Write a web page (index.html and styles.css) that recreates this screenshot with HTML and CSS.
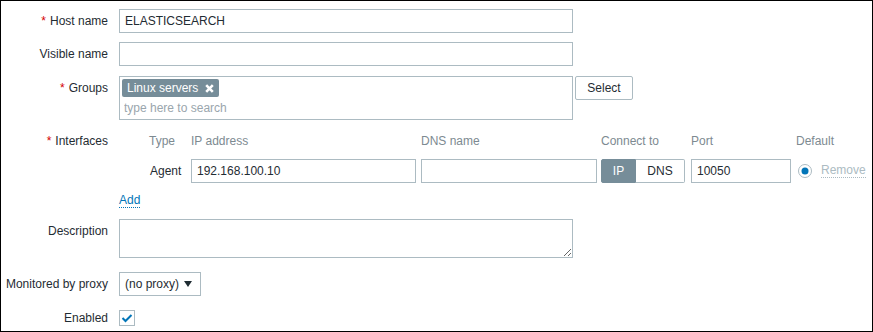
FILE: index.html
```html
<!DOCTYPE html>
<html lang="en">
<head>
  <meta charset="UTF-8" />
  <title>Host</title>
  <link rel="stylesheet" href="styles.css">
</head>
<body>

  <div class="page">
    <div class="form">

      <div class="row row-host">
        <label class="lbl req">Host name</label>
        <input class="input wide" type="text" value="ELASTICSEARCH" />
      </div>

      <div class="row row-visible">
        <label class="lbl">Visible name</label>
        <input class="input wide" type="text" />
      </div>

      <div class="row row-groups">
        <label class="lbl req">Groups</label>
        <div class="multiselect">
          <span class="tag">Linux servers
            <svg class="tag-x" width="9" height="9" viewBox="0 0 9 9"><path d="M1.2 1.2 L7.8 7.8 M7.8 1.2 L1.2 7.8" stroke="#fff" stroke-width="2.6" /></svg>
          </span>
          <input class="ms-search" type="text" placeholder="type here to search" />
        </div>
        <button class="btn">Select</button>
      </div>

      <div class="row row-ifaces">
        <label class="lbl req">Interfaces</label>
        <div class="ifaces">
          <div class="if-grid if-head">
            <span class="col-type">Type</span>
            <span>IP address</span>
            <span>DNS name</span>
            <span>Connect to</span>
            <span>Port</span>
            <span>Default</span>
          </div>
          <div class="if-grid if-row">
            <span class="col-type">Agent</span>
            <input class="input ip" type="text" value="192.168.100.10" />
            <input class="input dns" type="text" />
            <div class="toggle">
              <span class="seg on">IP</span>
              <span class="seg">DNS</span>
            </div>
            <input class="input port" type="text" value="10050" />
            <div class="default">
              <svg class="radio" width="14" height="14" viewBox="0 0 14 14">
                <circle cx="7" cy="7" r="6.5" fill="#fff" stroke="#acbbc2" />
                <circle cx="7" cy="7" r="3.5" fill="#0275b8" />
              </svg>
              <span class="link-off">Remove</span>
            </div>
          </div>
          <a class="link" href="#">Add</a>
        </div>
      </div>

      <div class="row row-desc">
        <label class="lbl">Description</label>
        <textarea class="textarea"></textarea>
      </div>

      <div class="row row-proxy">
        <label class="lbl">Monitored by proxy</label>
        <div class="select">
          <span>(no proxy)</span>
          <svg width="8" height="6" viewBox="0 0 8 6"><path d="M0 0 H8 L4 6 Z" fill="#1f2c33" /></svg>
        </div>
      </div>

      <div class="row row-enabled">
        <label class="lbl">Enabled</label>
        <div class="checkbox">
          <svg width="12" height="10" viewBox="0 0 12 10"><path d="M1.5 5 L4.5 8 L10.5 2" fill="none" stroke="#0275b8" stroke-width="2" /></svg>
        </div>
      </div>

    </div>
  </div>

</body>
</html>
```

FILE: styles.css
```css
body {
  margin: 0;
  font-family: "Liberation Sans", Arial, sans-serif;
  font-size: 12px;
  color: #1f2c33;
  background-color: #fff;
}

.page {
  box-sizing: border-box;
  width: 873px;
  height: 332px;
  border: 1px solid #000;
  overflow: hidden;
}

.form {
  padding-top: 8px;
  display: flex;
  flex-direction: column;
}

.row {
  display: flex;
  align-items: flex-start;
}

.row-visible { margin-top: 9px; }
.row-groups { margin-top: 10px; }
.row-ifaces { margin-top: 9px; }
.row-desc { margin-top: 6px; }
.row-proxy { margin-top: 14px; }
.row-enabled { margin-top: 10px; }

.lbl {
  box-sizing: border-box;
  width: 118px;
  padding-right: 11px;
  text-align: right;
  line-height: 24px;
  white-space: nowrap;
}

.lbl.req::before {
  content: "*";
  color: #d40000;
  margin-right: 4px;
}

.input {
  box-sizing: border-box;
  height: 24px;
  margin: 0;
  padding: 0 5px;
  border: 1px solid #acbbc2;
  border-radius: 0;
  font-family: inherit;
  font-size: 12px;
  color: #1f2c33;
  background: #fff;
  outline: none;
}

.wide { width: 454px; }

/* Groups multiselect */
.multiselect {
  box-sizing: border-box;
  width: 454px;
  height: 44px;
  border: 1px solid #acbbc2;
  padding: 2px 2px 0;
  display: flex;
  flex-direction: column;
  align-items: flex-start;
}

.tag {
  display: flex;
  align-items: center;
  gap: 7px;
  height: 18px;
  padding: 0 5px;
  background-color: #768d99;
  color: #fff;
  border-radius: 2px;
  line-height: 18px;
}

.ms-search {
  border: none;
  outline: none;
  padding: 0 2px;
  margin-top: 1px;
  height: 20px;
  font-family: inherit;
  font-size: 12px;
  width: 300px;
}

.ms-search::placeholder {
  color: #9aa6ad;
}

.btn {
  box-sizing: border-box;
  margin-left: 2px;
  height: 24px;
  width: 58px;
  padding: 0;
  border: 1px solid #acbbc2;
  border-radius: 2px;
  background: #fff;
  font-family: inherit;
  font-size: 12px;
  color: #1f2c33;
}

/* Interfaces table */
.ifaces {
  display: flex;
  flex-direction: column;
  align-items: flex-start;
}

.if-grid {
  display: grid;
  grid-template-columns: 72px 230px 180px 90px 105px auto;
  align-items: center;
  height: 24px;
}

.if-head {
  color: #7d8a91;
}

.if-row {
  margin-top: 6px;
}

.col-type {
  padding-left: 30px;
}

.if-row .col-type {
  padding-left: 31px;
}

.ip { width: 225px; }
.dns { width: 176px; }
.port { width: 100px; }

.toggle {
  display: flex;
  height: 24px;
  width: 84px;
}

.seg {
  box-sizing: border-box;
  display: flex;
  align-items: center;
  justify-content: center;
  height: 24px;
  border: 1px solid #acbbc2;
}

.seg.on {
  width: 35px;
  background-color: #768d99;
  border-color: #768d99;
  color: #fff;
  border-radius: 2px 0 0 2px;
}

.seg:last-child {
  flex: 1;
  border-left: none;
  border-radius: 0 2px 2px 0;
}

.default {
  display: flex;
  align-items: center;
  padding-left: 2px;
}

.radio {
  margin-right: 9px;
}

.link-off {
  color: #acbbc2;
  border-bottom: 1px dotted #acbbc2;
  line-height: 13px;
}

.link {
  margin-top: 10px;
  margin-bottom: 5px;
  color: #0275b8;
  text-decoration: none;
  border-bottom: 1px dotted #0275b8;
  line-height: 14px;
}

.textarea {
  box-sizing: border-box;
  width: 454px;
  height: 39px;
  margin: 0;
  border: 1px solid #acbbc2;
  border-radius: 0;
  font-family: inherit;
  font-size: 12px;
  outline: none;
}

.select {
  box-sizing: border-box;
  display: flex;
  align-items: center;
  justify-content: space-between;
  width: 82px;
  height: 24px;
  padding: 0 8px 0 5px;
  border: 1px solid #acbbc2;
}

.checkbox {
  box-sizing: border-box;
  margin-top: 4px;
  width: 16px;
  height: 16px;
  border: 1px solid #acbbc2;
  display: flex;
  align-items: center;
  justify-content: center;
}
```
